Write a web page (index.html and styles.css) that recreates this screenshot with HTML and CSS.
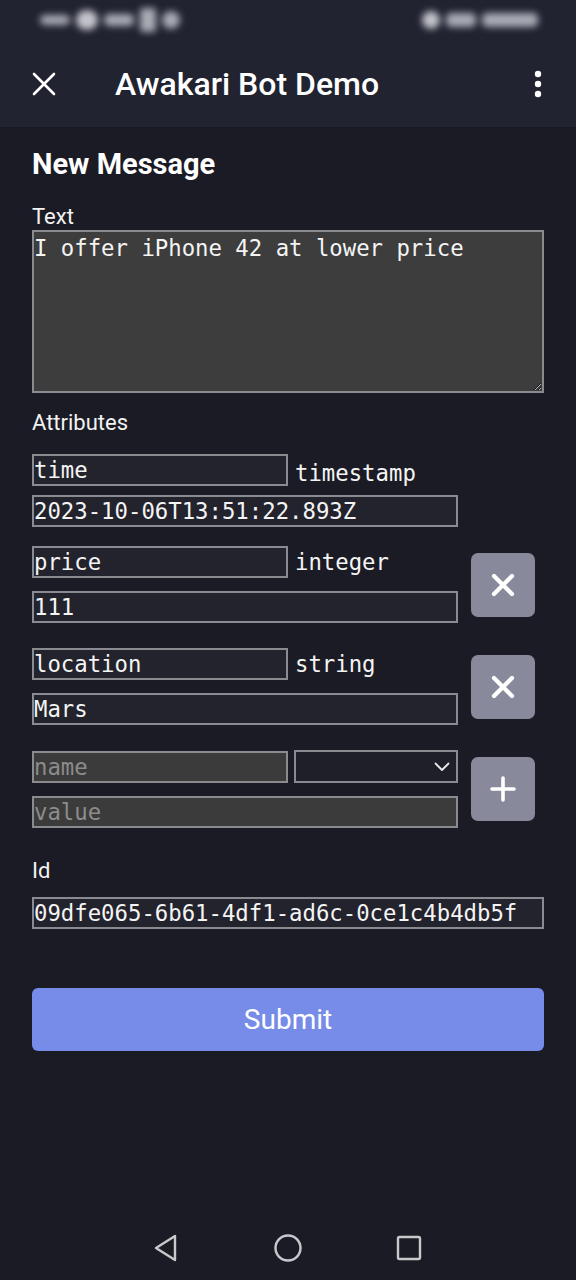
FILE: index.html
```html
<!DOCTYPE html>
<html>
<head>
<meta charset="utf-8">
<link rel="stylesheet" href="styles.css">
</head>
<body>
<div class="screen">
  <header class="topbar">
    <div class="status">
      <div class="status-left">
        <span class="blob b1"></span><span class="blob b2"></span><span class="blob b3"></span><span class="blob b4"></span><span class="blob b5"></span>
      </div>
      <div class="status-right">
        <span class="blob b6"></span><span class="blob b7"></span><span class="blob b8"></span>
      </div>
    </div>
    <div class="appbar">
      <svg class="close-icon" width="24" height="24" viewBox="0 0 24 24"><path d="M2 2 L22 22 M22 2 L2 22" stroke="#fff" stroke-width="2.6" stroke-linecap="round"/></svg>
      <h1 class="title">Awakari Bot Demo</h1>
      <svg class="kebab" width="10" height="28" viewBox="0 0 10 28"><circle cx="5" cy="4" r="3.2" fill="#fff"/><circle cx="5" cy="14" r="3.2" fill="#fff"/><circle cx="5" cy="24" r="3.2" fill="#fff"/></svg>
    </div>
  </header>

  <main class="content">
    <h2 class="heading">New Message</h2>

    <label class="label label-text">Text</label>
    <textarea class="textarea">I offer iPhone 42 at lower price</textarea>

    <label class="label label-attrs">Attributes</label>

    <div class="attr attr-first">
      <div class="fields">
        <div class="row row-first">
          <input class="inp name" value="time">
          <span class="type type-first">timestamp</span>
        </div>
        <input class="inp value value-first" value="2023-10-06T13:51:22.893Z">
      </div>
    </div>

    <div class="attr attr-second">
      <div class="fields">
        <div class="row">
          <input class="inp name" value="price">
          <span class="type">integer</span>
        </div>
        <input class="inp value" value="111">
      </div>
      <button class="sq-btn"><svg width="24" height="24" viewBox="0 0 24 24"><path d="M3 3 L21 21 M21 3 L3 21" stroke="#fff" stroke-width="4.2" stroke-linecap="round"/></svg></button>
    </div>

    <div class="attr">
      <div class="fields">
        <div class="row">
          <input class="inp name" value="location">
          <span class="type">string</span>
        </div>
        <input class="inp value" value="Mars">
      </div>
      <button class="sq-btn"><svg width="24" height="24" viewBox="0 0 24 24"><path d="M3 3 L21 21 M21 3 L3 21" stroke="#fff" stroke-width="4.2" stroke-linecap="round"/></svg></button>
    </div>

    <div class="attr">
      <div class="fields">
        <div class="row">
          <input class="inp name empty" placeholder="name">
          <div class="select"><svg width="16" height="10" viewBox="0 0 16 10"><path d="M1.5 1.5 L8 8 L14.5 1.5" stroke="#e8e8e8" stroke-width="1.8" fill="none" stroke-linecap="round" stroke-linejoin="round"/></svg></div>
        </div>
        <input class="inp value empty" placeholder="value">
      </div>
      <button class="sq-btn"><svg width="26" height="26" viewBox="0 0 26 26"><path d="M13 2 V24 M2 13 H24" stroke="#fff" stroke-width="3.6" stroke-linecap="round"/></svg></button>
    </div>

    <label class="label label-id">Id</label>
    <input class="inp id" value="09dfe065-6b61-4df1-ad6c-0ce1c4b4db5f">

    <button class="submit">Submit</button>
  </main>

  <nav class="navbar">
    <svg width="28" height="30" viewBox="0 0 28 30"><path d="M22 3 L22 27 L3 15 Z" stroke="#c9c9cc" stroke-width="2.4" fill="none" stroke-linejoin="round"/></svg>
    <svg width="30" height="30" viewBox="0 0 30 30"><circle cx="15" cy="15" r="12.5" stroke="#c9c9cc" stroke-width="2.4" fill="none"/></svg>
    <svg width="28" height="28" viewBox="0 0 28 28"><rect x="3" y="3" width="22" height="22" rx="1.5" stroke="#c9c9cc" stroke-width="2.4" fill="none"/></svg>
  </nav>
</div>
</body>
</html>
```

FILE: styles.css
```css
* { box-sizing: border-box; }
html, body { margin: 0; padding: 0; }
body {
  background: #1b1b25;
  font-family: Roboto, "Liberation Sans", sans-serif;
  color: #fff;
}
.screen {
  width: 576px;
  height: 1280px;
  display: flex;
  flex-direction: column;
  background: #1b1b25;
}
.topbar {
  background: #212331;
  height: 128px;
  border-bottom: 1px solid #191a22;
}
.status {
  height: 40px;
  display: flex;
  justify-content: space-between;
  align-items: center;
  padding: 0 38px 0 40px;
  filter: blur(3.5px);
}
.status-left, .status-right { display: flex; align-items: center; gap: 6px; }
.blob { display: inline-block; background: #a9abb5; border-radius: 5px; height: 12px; }
.b1 { width: 30px; height: 10px; }
.b2 { width: 22px; height: 20px; border-radius: 10px; background: #c4c5cc; }
.b3 { width: 30px; height: 12px; }
.b4 { width: 16px; height: 24px; border-radius: 3px; }
.b5 { width: 18px; height: 18px; border-radius: 9px; }
.b6 { width: 18px; height: 18px; border-radius: 9px; background: #c4c5cc; }
.b7 { width: 30px; height: 14px; }
.b8 { width: 56px; height: 14px; }

.appbar {
  height: 87px;
  display: flex;
  align-items: center;
  padding: 0 0 0 32px;
}
.close-icon { display: block; margin-right: 59px; }
.title {
  margin: 0;
  font-size: 32px;
  font-weight: 500;
  letter-spacing: 0;
  flex: 1;
}
.kebab { display: block; margin-right: 33px; }

.content {
  padding: 19px 32px 0 32px;
  display: flex;
  flex-direction: column;
  align-items: flex-start;
  flex: 1;
}
.heading {
  margin: 0;
  font-size: 29px;
  font-weight: 700;
  line-height: 34px;
  height: 34px;
}
.label {
  display: block;
  font-size: 22px;
  line-height: 26px;
  color: #f2f2f2;
}
.label-text { margin-top: 23px; }
.label-attrs { margin-top: 17px; }
.label-id { margin-top: 30px; }

.textarea {
  display: block;
  width: 512px;
  height: 163px;
  margin: 0;
  background: #3d3d3d;
  border: 2px solid #8a8b91;
  color: #f4f4f4;
  font-family: "DejaVu Sans Mono", monospace;
  font-size: 22.3px;
  line-height: 26px;
  padding: 3px 0;
  resize: vertical;
}

.inp {
  display: block;
  height: 32px;
  margin: 0;
  border: 2px solid #8a8b91;
  background: #23232d;
  color: #f4f4f4;
  font-family: "DejaVu Sans Mono", monospace;
  font-size: 22.3px;
  padding: 0;
  outline: none;
}
.inp.empty { background: #3b3b3b; }
.inp::placeholder { color: #8c8c8c; }
.name { width: 256px; }
.value { width: 426px; margin-top: 13px; }
.value-first { margin-top: 9px; }
.id { width: 512px; margin-top: 13px; }

.attr {
  display: flex;
  align-items: center;
  gap: 13px;
  margin-top: 25px;
}
.attr-first { margin-top: 18px; }
.attr-second { margin-top: 19px; }
.fields { display: flex; flex-direction: column; }
.row { display: flex; align-items: center; gap: 7px; }
.type {
  font-family: "DejaVu Sans Mono", monospace;
  font-size: 22.3px;
  color: #f4f4f4;
  line-height: 32px;
}
.type-first { position: relative; top: 3px; }
.select {
  width: 164px;
  height: 33px;
  border: 2px solid #8a8b91;
  background: #1f1f29;
  display: flex;
  justify-content: flex-end;
  align-items: center;
  padding-right: 6px;
  margin-left: -1px;
}
.select svg { display: block; }
.sq-btn {
  width: 64px;
  height: 64px;
  border: none;
  border-radius: 7px;
  background: #888a9c;
  display: flex;
  align-items: center;
  justify-content: center;
  padding: 0;
}
.sq-btn svg { display: block; }

.submit {
  margin-top: 59px;
  width: 512px;
  height: 63px;
  border: none;
  border-radius: 6px;
  background: #768ce8;
  color: #fff;
  font-family: Roboto, "Liberation Sans", sans-serif;
  font-size: 28px;
}

.navbar {
  height: 64px;
  display: flex;
  justify-content: center;
  align-items: center;
  gap: 92px;
}
.navbar svg { display: block; }
```
